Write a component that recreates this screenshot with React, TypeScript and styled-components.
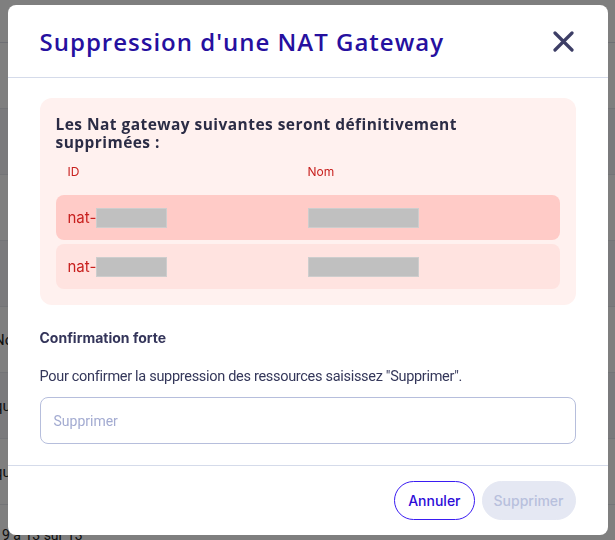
import React from "react";
import styled, { createGlobalStyle } from "styled-components";

const Global = createGlobalStyle`
  html, body { margin: 0; padding: 0; }
  body { font-family: "Inter", "Liberation Sans", sans-serif; background: #fff; }
  * { box-sizing: border-box; }
`;

const Page = styled.div`
  width: 615px;
  height: 540px;
  overflow: hidden;
  background: #ffffff;
  font-family: "Roboto", sans-serif;
`;

const PageTop = styled.div`
  height: 43px;
  border-bottom: 1px solid #dcdfe8;
`;

const PageRow = styled.div<{ $shade?: boolean }>`
  height: 66px;
  display: flex;
  align-items: center;
  margin-left: -6px;
  border-bottom: 1px solid #e6e8ef;
  background: ${(p) => (p.$shade ? "#f4f5f8" : "#ffffff")};
  font-size: 15px;
  color: #222;
`;

const PageFooter = styled.div`
  padding: 22px 0 0 2px;
  font-size: 14px;
  color: #222;
`;

const Overlay = styled.div`
  position: fixed;
  inset: 0;
  background: rgba(0, 0, 0, 0.5);
  display: flex;
  align-items: center;
  justify-content: center;
`;

const Modal = styled.div`
  width: 600px;
  background: #ffffff;
  border-radius: 8px;
  display: flex;
  flex-direction: column;
`;

const Header = styled.div`
  height: 73px;
  display: flex;
  align-items: center;
  justify-content: space-between;
  padding: 0 32px;
  border-bottom: 1px solid #d5dbea;
`;

const Title = styled.h2`
  margin: 0;
  font-family: "Open Sans", sans-serif;
  font-weight: 600;
  font-size: 24px;
  letter-spacing: 1px;
  color: #26109f;
`;

const CloseButton = styled.button`
  border: 0;
  background: none;
  padding: 0;
  width: 24px;
  height: 24px;
  display: flex;
  align-items: center;
  justify-content: center;
  cursor: pointer;
`;

const Body = styled.div`
  padding: 20px 32px 21px;
  display: flex;
  flex-direction: column;
`;

const DangerBox = styled.div`
  background: #fff1ef;
  border-radius: 12px;
  padding: 17px 16px 16px;
`;

const DangerTitle = styled.div`
  font-family: "Open Sans", sans-serif;
  font-weight: 700;
  font-size: 15.5px;
  line-height: 18px;
  letter-spacing: 0.45px;
  color: #2b2c45;
  max-width: 470px;
`;

const Grid = styled.div`
  display: grid;
  grid-template-columns: 1fr 1fr;
  padding: 0 12px;
  align-items: center;
`;

const HeadRow = styled(Grid)`
  height: 36px;
  margin-top: 2px;
  margin-bottom: 6px;
  font-size: 12px;
  color: #c8201e;
`;

const Rows = styled.div`
  display: flex;
  flex-direction: column;
  gap: 4px;
`;

const Row = styled(Grid)<{ $strong?: boolean }>`
  height: 45px;
  border-radius: 8px;
  background: ${(p) => (p.$strong ? "#ffcbc7" : "#ffe3e0")};
  font-size: 15px;
  color: #c8201e;
`;

const Cell = styled.div`
  display: flex;
  align-items: center;
`;

const Redacted = styled.span<{ $w: number }>`
  display: inline-block;
  width: ${(p) => p.$w}px;
  height: 20px;
  background: #c0c0c0;
  border: 1px solid #cdcdcd;
`;

const SectionTitle = styled.div`
  margin-top: 24px;
  font-weight: 700;
  font-size: 14px;
  color: #34355a;
`;

const Help = styled.p`
  margin: 22px 0 0;
  font-family: "Roboto", sans-serif;
  font-size: 14.5px;
  letter-spacing: -0.3px;
  color: #34375a;
`;

const Input = styled.input`
  margin-top: 12px;
  height: 47px;
  width: 100%;
  border: 1px solid #b6bedc;
  border-radius: 8px;
  padding: 0 13px;
  font-family: "Roboto", sans-serif;
  font-size: 14px;
  color: #2b2c45;
  outline: none;
  &::placeholder { color: #a3abd1; }
`;

const Footer = styled.div`
  border-top: 1px solid #d5dbea;
  padding: 15px 32px 15px;
  display: flex;
  justify-content: flex-end;
  gap: 7px;
`;

const Button = styled.button<{ $variant: "outline" | "disabled" }>`
  height: 39px;
  border-radius: 20px;
  font-family: "Inter", sans-serif;
  font-weight: 500;
  font-size: 14px;
  padding: 0 ${(p) => (p.$variant === "outline" ? "13px" : "11px")};
  cursor: pointer;
  border: 1px solid ${(p) => (p.$variant === "outline" ? "#3a1cf2" : "#e5e8f3")};
  background: ${(p) => (p.$variant === "outline" ? "#ffffff" : "#e5e8f3")};
  color: ${(p) => (p.$variant === "outline" ? "#2c0cd8" : "#b8c0dd")};
`;

const rows = [{ strong: true }, { strong: false }];

export default function App() {
  return (
    <>
      <Global />
      <Page>
        <PageTop />
        <PageRow>&nbsp;</PageRow>
        <PageRow $shade>&nbsp;</PageRow>
        <PageRow>&nbsp;</PageRow>
        <PageRow $shade>&nbsp;</PageRow>
        <PageRow>Nom</PageRow>
        <PageRow $shade>quota</PageRow>
        <PageRow>quota</PageRow>
        <PageFooter>9 à 13 sur 13</PageFooter>
      </Page>
      <Overlay>
        <Modal role="dialog">
          <Header>
            <Title>Suppression d'une NAT Gateway</Title>
            <CloseButton aria-label="Fermer">
              <svg width="21" height="21" viewBox="0 0 21 21">
                <path d="M2 2 L19 19 M19 2 L2 19" stroke="#3d3e66" strokeWidth="3.2" strokeLinecap="round" />
              </svg>
            </CloseButton>
          </Header>
          <Body>
            <DangerBox>
              <DangerTitle>Les Nat gateway suivantes seront définitivement supprimées :</DangerTitle>
              <HeadRow>
                <Cell>ID</Cell>
                <Cell>Nom</Cell>
              </HeadRow>
              <Rows>
                {rows.map((r, i) => (
                  <Row key={i} $strong={r.strong}>
                    <Cell>
                      nat-<Redacted $w={71} />
                    </Cell>
                    <Cell>
                      <Redacted $w={111} />
                    </Cell>
                  </Row>
                ))}
              </Rows>
            </DangerBox>
            <SectionTitle>Confirmation forte</SectionTitle>
            <Help>Pour confirmer la suppression des ressources saisissez "Supprimer".</Help>
            <Input placeholder="Supprimer" />
          </Body>
          <Footer>
            <Button $variant="outline">Annuler</Button>
            <Button $variant="disabled" disabled>Supprimer</Button>
          </Footer>
        </Modal>
      </Overlay>
    </>
  );
}
